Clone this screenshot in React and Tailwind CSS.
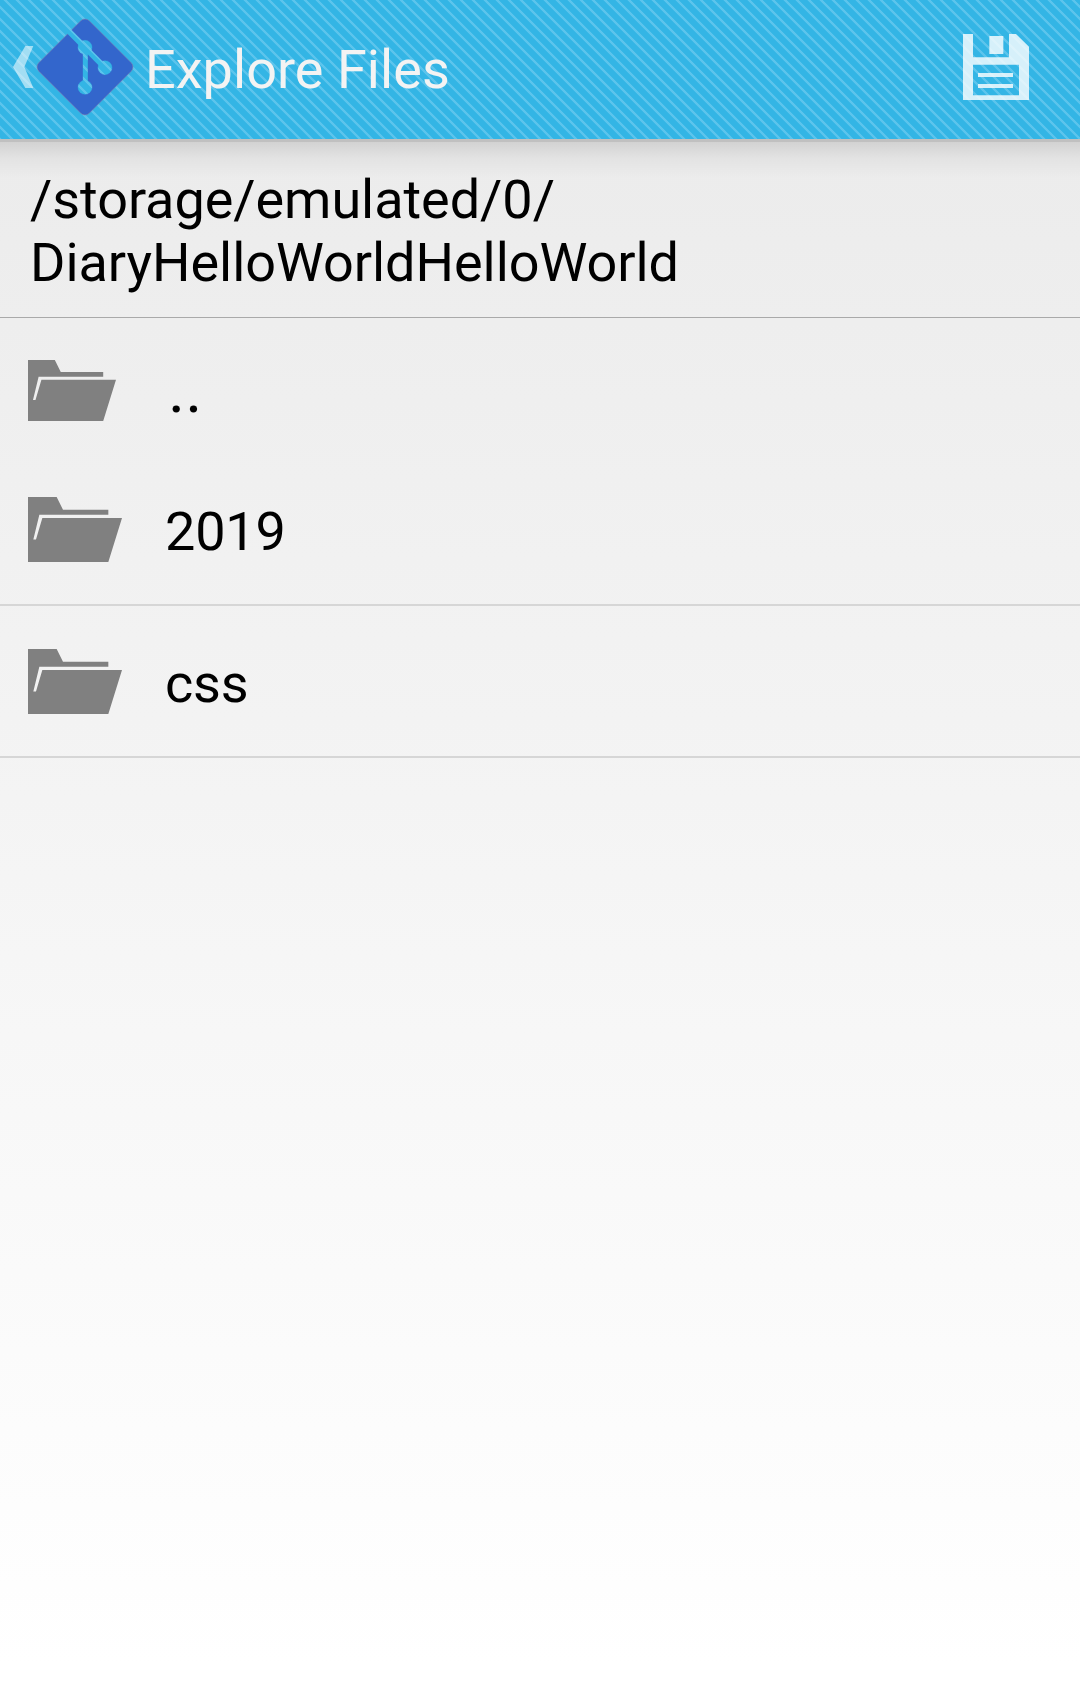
function Folder({ className }) {
  return (
    <svg className={className} viewBox="84 469 282 194" preserveAspectRatio="none" fill="#808080">
      <path d="M84 469H170L189 507H325V522H118L100 596H108L127 532H366L325 663H84Z" />
    </svg>
  );
}

function BackChevron() {
  return (
    <svg className="ml-[13px] h-[42px] w-[21px]" viewBox="39 138 63 126" fill="#fff" fillOpacity="0.55">
      <path d="M76 138H100L73 201L100 264H76L39 201Z" />
    </svg>
  );
}

function GitLogo() {
  return (
    <svg className="ml-[2px] h-[98px] w-[98px]" viewBox="108 54 294 294">
      <mask id="branches" maskUnits="userSpaceOnUse" x="108" y="54" width="294" height="294">
        <rect x="108" y="54" width="294" height="294" fill="#fff" />
        <g fill="#000" stroke="#000">
          <path d="M200 87L315 203" strokeWidth="17" />
          <path d="M256 142V262" strokeWidth="15" />
          <circle cx="255" cy="142" r="21" />
          <circle cx="315" cy="203" r="21" />
          <circle cx="255" cy="262" r="21" />
        </g>
      </mask>
      <g mask="url(#branches)">
        <rect
          x="148" y="94" width="214" height="214" rx="18"
          transform="rotate(45 255 201)" fill="#3366cc" stroke="#8a7aa8" strokeWidth="1.5"
        />
      </g>
    </svg>
  );
}

function SaveIcon() {
  return (
    <svg className="mr-[51px] h-[66px] w-[66px]" viewBox="69 102 198 198" fill="#fff" fillOpacity="0.8">
      <path fillRule="evenodd" d="M69 102H99V172H207V102H228L267 140V300H69ZM99 194V286H237V194Z" />
      <path d="M148 108H190V162H148ZM114 219H219V231H114ZM114 252H219V264H114Z" />
    </svg>
  );
}

function Row({ name }) {
  return (
    <li className="flex h-[152px] items-start border-b-2 border-[#d6d6d6] pl-7">
      <Folder className="mt-[42.5px] h-[65px] w-[94px]" />
      <span className="mt-[46px] ml-[43px] tracking-[-0.2px]">{name}</span>
    </li>
  );
}

export default function App() {
  return (
    <div className="flex h-[1699px] w-[1080px] flex-col bg-linear-to-b from-[#eaeaea] to-white to-98% font-[Roboto,sans-serif] text-[54px] leading-[63px] text-black">
      <header className="flex h-[139px] shrink-0 items-center bg-[repeating-linear-gradient(45deg,#5cc4ec_0px,#5cc4ec_0.9px,#33b5e5_1.5px,#33b5e5_6.985px,#5cc4ec_7.585px,#5cc4ec_8.485px)] pb-[5px] text-[#f3f3f3]">
        <BackChevron />
        <GitLogo />
        <h1 className="mt-[5px] ml-[11px] flex-1 tracking-[0.05px]">Explore Files</h1>
        <SaveIcon />
      </header>
      <div className="h-[179px] shrink-0 border-t-[3px] border-b border-t-[#c0c0c0] border-b-[#a9a9a9] bg-[linear-gradient(to_bottom,rgba(0,0,0,0.11),rgba(0,0,0,0.04)_16px,transparent_36px)] pt-[26px] pl-[30px] tracking-[-0.05px]">
        <p>/storage/emulated/0/</p>
        <p>DiaryHelloWorldHelloWorld</p>
      </div>
      <div className="flex h-[136px] shrink-0 items-start pl-7">
        <Folder className="mt-[41.5px] h-[61px] w-[88px]" />
        <span className="mt-[41px] ml-[52px] text-[65px] leading-[63px]">..</span>
      </div>
      <ul>
        <Row name="2019" />
        <Row name="css" />
      </ul>
    </div>
  );
}
